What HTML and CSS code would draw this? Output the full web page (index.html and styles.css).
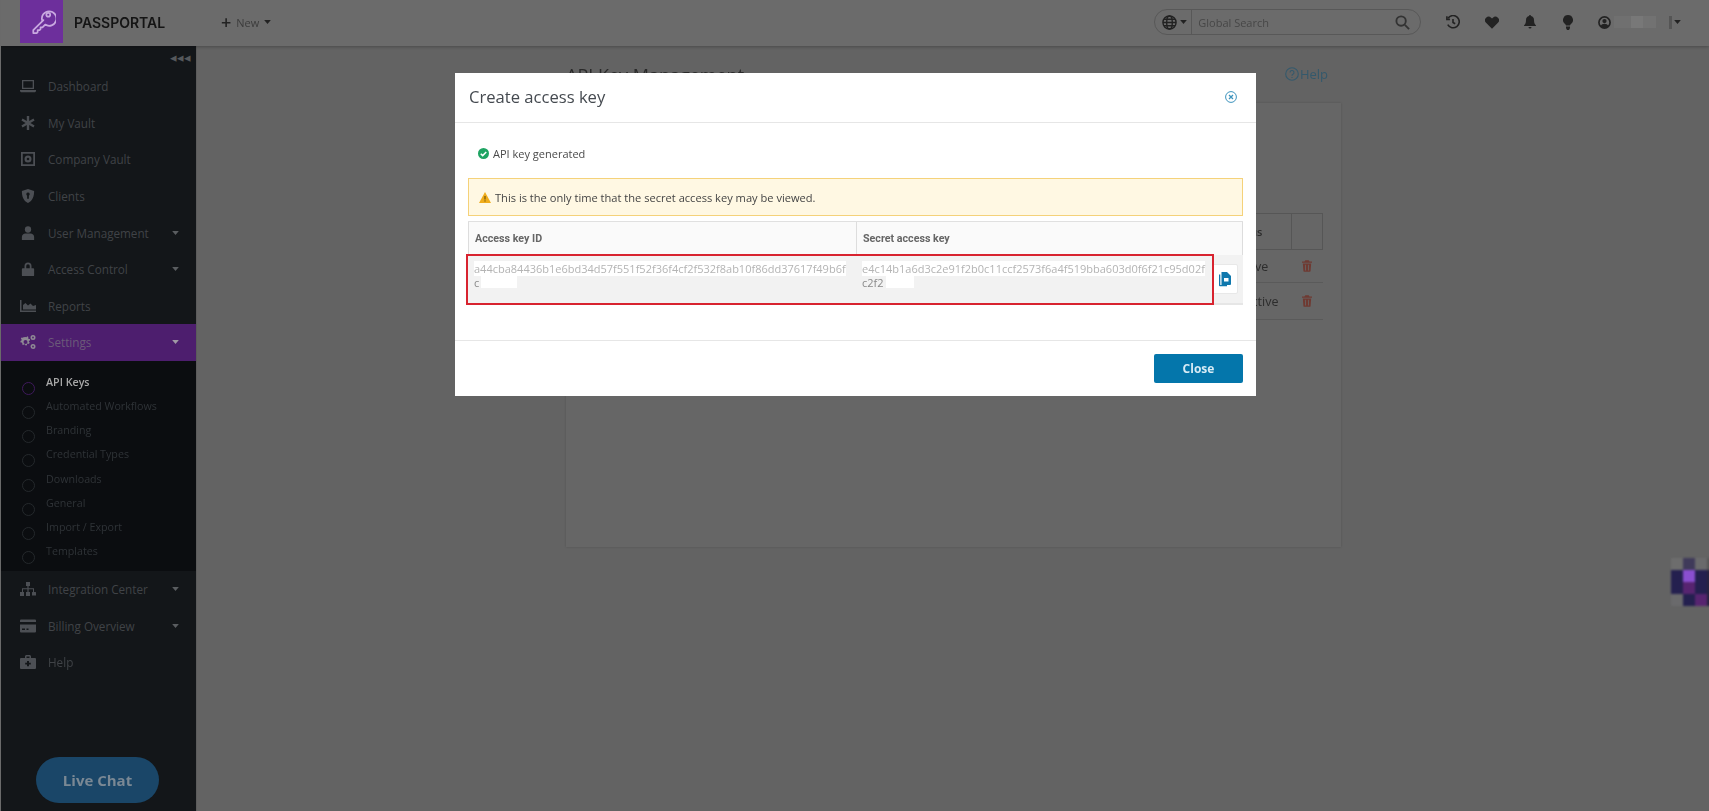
FILE: index.html
```html
<!DOCTYPE html>
<html lang="en">
<head>
    <meta charset="UTF-8">
    <meta name="viewport" content="width=device-width, initial-scale=1.0">
    <title>Passportal - API Keys</title>
    <link rel="stylesheet" href="styles.css">
</head>
<body>
    <svg class="sprite" xmlns="http://www.w3.org/2000/svg">
        <symbol id="i-caret" viewBox="0 0 10 6"><path d="M0 0h10L5 6z"/></symbol>
        <symbol id="i-laptop" viewBox="0 0 16 14"><path d="M2 1h12v9H2zM3.300 2.300v6.400h9.400V2.300zM0 11h16v1.200l-1 1H1l-1-1z" fill-rule="evenodd"/></symbol>
        <symbol id="i-star" viewBox="0 0 14 14"><path d="M5.800 0h2.400v4.900L12.400 2.500l1.200 2L9.400 7l4.200 2.500-1.200 2-4.200-2.400V14H5.800V9.100l-4.200 2.400-1.200-2L4.600 7 .4 4.500l1.200-2 4.200 2.400z"/></symbol>
        <symbol id="i-vault" viewBox="0 0 16 16"><path d="M0 0h16v16H0zM2 2v12h12V2zM8 4a4 4 0 1 1 0 8 4 4 0 0 1 0-8zM8 6.500a1.500 1.500 0 1 0 0 3 1.500 1.500 0 0 0 0-3z" fill-rule="evenodd"/></symbol>
        <symbol id="i-shield" viewBox="0 0 14 16"><path d="M7 0l7 2.200c0 6-1.500 11-7 13.800C1.500 13.200 0 8.200 0 2.200zM7 4a2 2 0 0 0-1 3.700V11h2V7.700A2 2 0 0 0 7 4z" fill-rule="evenodd"/></symbol>
        <symbol id="i-user" viewBox="0 0 14 16"><circle cx="7" cy="4" r="3.600"/><path d="M0 16v-3.500C0 10 2 8.500 4 8.500h6c2 0 4 1.500 4 4V16z"/></symbol>
        <symbol id="i-lock" viewBox="0 0 14 16"><path d="M3 7V4.500a4 4 0 0 1 8 0V7h2a1 1 0 0 1 1 1v7a1 1 0 0 1-1 1H1a1 1 0 0 1-1-1V8a1 1 0 0 1 1-1zM5 7h4V4.500a2 2 0 0 0-4 0z" fill-rule="evenodd"/></symbol>
        <symbol id="i-chart" viewBox="0 0 16 12"><path d="M0 0h1.500v10.500H16V12H0zM3 9.500V5l2.500-2L8 5.500 10.500 3.500 13 6l3-1v4.500z"/></symbol>
        <symbol id="i-cogs" viewBox="0 0 16 14"><path d="M5.500 2l1 .2.700-1 1.300.8-.4 1.100.6.800 1.200 0 .2 1.500-1.100.4-.2 1 .9.800-.8 1.300-1.100-.4-.8.6 0 1.200-1.500.2-.4-1.100-1-.2-.8.900-1.300-.8.400-1.100-.6-.8-1.200 0-.2-1.500 1.100-.4.200-1-.9-.8.8-1.300 1.100.4.800-.6zM5.500 5a2 2 0 1 0 0 4 2 2 0 0 0 0-4z" fill-rule="evenodd"/><path d="M13 0a2.500 2.500 0 1 1 0 5 2.500 2.500 0 0 1 0-5zm0 1.600a.9.900 0 1 0 0 1.800.9.900 0 0 0 0-1.800zM13 9a2.500 2.500 0 1 1 0 5 2.500 2.500 0 0 1 0-5zm0 1.600a.9.900 0 1 0 0 1.800.9.900 0 0 0 0-1.800z" fill-rule="evenodd"/></symbol>
        <symbol id="i-sitemap" viewBox="0 0 16 14"><path d="M6 0h4v4H8.600v2.200H14V10h1.500a.5.500 0 0 1 .5.500v3h-4v-3a.5.500 0 0 1 .5-.5h.5V7.300H8.600V10H10v4H6v-4h1.400V7.300H3V10h1v4H0v-4h2V6.200h5.400V4H6z"/></symbol>
        <symbol id="i-card" viewBox="0 0 16 13"><path d="M1 0h14a1 1 0 0 1 1 1v1.500H0V1a1 1 0 0 1 1-1zM0 5h16v7a1 1 0 0 1-1 1H1a1 1 0 0 1-1-1zM2 9v1.500h3V9zM6.500 9v1.500h2V9z" fill-rule="evenodd"/></symbol>
        <symbol id="i-medkit" viewBox="0 0 16 14"><path d="M5 3V1.500C5 .7 5.700 0 6.500 0h3c.8 0 1.500.7 1.500 1.500V3h4a1 1 0 0 1 1 1v9a1 1 0 0 1-1 1H1a1 1 0 0 1-1-1V4a1 1 0 0 1 1-1zM6.500 1.500V3h3V1.500zM7 6v1.800H5.200v1.700H7v1.800h2V9.500h1.800V7.800H9V6z" fill-rule="evenodd"/></symbol>
        <symbol id="i-trash" viewBox="0 0 12 14"><path d="M4 0h4l1 1.500h3V3H0V1.500h3zM1 4h10l-.7 9a1 1 0 0 1-1 1H2.700a1 1 0 0 1-1-1zM3.500 5.500l.3 7h1l-.3-7zM7.500 5.500l-.3 7h1l.3-7z" fill-rule="evenodd"/></symbol>
    </svg>

    <header class="topbar">
        <div class="logo">
            <svg viewBox="0 0 30 30" width="29" height="29" fill="none" stroke="#c9a9e0" stroke-width="1.800">
                <path d="M17 13.500l-10.500 10.500v3h3.500l1-1v-2h2l1-1v-2h2l2.800-2.800a7.500 7.500 0 1 0-3-3.900z" stroke-linejoin="round"/>
                <circle cx="22" cy="8" r="2"/>
            </svg>
        </div>
        <div class="brand">PASSPORTAL</div>
        <div class="new-menu">
            <span class="plus">+</span> New
            <svg class="caret dark"><use href="#i-caret"/></svg>
        </div>
        <div class="search">
            <div class="search-scope">
                <svg width="15" height="15" viewBox="0 0 16 16" fill="none" stroke="#222" stroke-width="1.500">
                    <circle cx="8" cy="8" r="7"/><ellipse cx="8" cy="8" rx="3" ry="7"/><path d="M1 8h14M2 4.500h12M2 11.500h12"/>
                </svg>
                <svg class="caret dark"><use href="#i-caret"/></svg>
            </div>
            <span class="search-text">Global Search</span>
            <svg class="search-icon" width="15" height="15" viewBox="0 0 16 16" fill="none" stroke="#333" stroke-width="2">
                <circle cx="6.500" cy="6.500" r="5"/><path d="M10.500 10.500L15 15"/>
            </svg>
        </div>
        <div class="top-icons">
            <svg width="14" height="14" viewBox="0 0 16 16" fill="none" stroke="#222" stroke-width="1.800"><path d="M2.500 3.500A7 7 0 1 1 2 11M1 1.500v3.500h3.500M8 4.500V8.500l2.500 1.500"/></svg>
            <svg width="14" height="13" viewBox="0 0 16 14" fill="#222"><path d="M8 14L1.200 7.200A4 4 0 0 1 7 1.500l1 1 1-1a4 4 0 0 1 5.800 5.700z"/></svg>
            <svg width="12" height="14" viewBox="0 0 12 14" fill="#222"><path d="M6 0a1 1 0 0 1 1 1.100C9 1.600 10 3.200 10 5c0 3 .8 4.300 2 5.500V11H0v-.5C1.200 9.300 2 8 2 5c0-1.800 1-3.400 3-3.900A1 1 0 0 1 6 0zM4.500 12h3a1.500 1.500 0 0 1-3 0z"/></svg>
            <svg width="10" height="15" viewBox="0 0 10 15" fill="#222"><path d="M5 0a5 5 0 0 1 3 9c-.6.500-1 1-1 1.500H3C3 10 2.600 9.500 2 9a5 5 0 0 1 3-9zM3 11.500h4V13l-1 2H4l-1-2z"/></svg>
            <svg class="user-icon" width="13" height="13" viewBox="0 0 14 14"><circle cx="7" cy="7" r="6" fill="none" stroke="#222" stroke-width="1.800"/><circle cx="7" cy="5.500" r="2.300" fill="#222"/><path d="M2.800 11c.8-2 2.400-2.700 4.200-2.700s3.400.7 4.200 2.700A6 6 0 0 1 2.800 11z" fill="#222"/></svg>
            <div class="user-name"></div>
            <div class="user-split"></div>
            <svg class="caret dark"><use href="#i-caret"/></svg>
        </div>
    </header>

    <div class="layout">
        <aside class="sidebar">
            <div class="collapse">&#9666;&#9666;&#9666;</div>
            <nav class="nav">
                <a class="nav-item"><svg class="nav-icon"><use href="#i-laptop"/></svg>Dashboard</a>
                <a class="nav-item"><svg class="nav-icon"><use href="#i-star"/></svg>My Vault</a>
                <a class="nav-item"><svg class="nav-icon"><use href="#i-vault"/></svg>Company Vault</a>
                <a class="nav-item"><svg class="nav-icon"><use href="#i-shield"/></svg>Clients</a>
                <a class="nav-item"><svg class="nav-icon"><use href="#i-user"/></svg>User Management<svg class="caret"><use href="#i-caret"/></svg></a>
                <a class="nav-item"><svg class="nav-icon"><use href="#i-lock"/></svg>Access Control<svg class="caret"><use href="#i-caret"/></svg></a>
                <a class="nav-item"><svg class="nav-icon"><use href="#i-chart"/></svg>Reports</a>
                <a class="nav-item active"><svg class="nav-icon"><use href="#i-cogs"/></svg>Settings<svg class="caret"><use href="#i-caret"/></svg></a>
                <div class="subnav">
                    <a class="sub-item current">API Keys</a>
                    <a class="sub-item">Automated Workflows</a>
                    <a class="sub-item">Branding</a>
                    <a class="sub-item">Credential Types</a>
                    <a class="sub-item">Downloads</a>
                    <a class="sub-item">General</a>
                    <a class="sub-item">Import / Export</a>
                    <a class="sub-item">Templates</a>
                </div>
                <a class="nav-item"><svg class="nav-icon"><use href="#i-sitemap"/></svg>Integration Center<svg class="caret"><use href="#i-caret"/></svg></a>
                <a class="nav-item"><svg class="nav-icon"><use href="#i-card"/></svg>Billing Overview<svg class="caret"><use href="#i-caret"/></svg></a>
                <a class="nav-item"><svg class="nav-icon"><use href="#i-medkit"/></svg>Help</a>
            </nav>
            <button class="live-chat">Live Chat</button>
        </aside>

        <main class="content">
            <div class="page-head">
                <h1>API Key Management</h1>
                <a class="help-link">
                    <svg width="14" height="14" viewBox="0 0 14 14" fill="none" stroke="#34596c" stroke-width="1.100"><circle cx="7" cy="7" r="6.300"/><path d="M5 5.500a2 2 0 1 1 3 1.700c-.7.400-1 .8-1 1.500M7 10v1"/></svg>Help
                </a>
            </div>
            <section class="card">
                <table class="key-table">
                    <tr><th class="col-name">Access Key ID</th><th class="col-status">Status</th><th class="col-del"></th></tr>
                    <tr><td></td><td>Active</td><td><svg class="trash"><use href="#i-trash"/></svg></td></tr>
                    <tr><td></td><td>Inactive</td><td><svg class="trash"><use href="#i-trash"/></svg></td></tr>
                </table>
            </section>
        </main>
    </div>

    <div class="pixels">
        <i></i><i class="p1"></i><i class="p2"></i><i class="p3"></i>
        <i class="p4"></i><i class="p5"></i><i class="p4"></i><i class="p6"></i>
        <i class="p4"></i><i class="p7"></i><i class="p4"></i><i class="p6"></i>
        <i class="p2"></i><i class="p4"></i><i class="p7"></i><i class="p6"></i>
    </div>

    <div class="modal">
        <div class="modal-head">
            <h2>Create access key</h2>
            <svg width="12" height="12" viewBox="0 0 12 12" fill="none" stroke="#3d93bd" stroke-width="1"><circle cx="6" cy="6" r="5.400"/><path d="M4 4l4 4M8 4l-4 4" stroke-width="1.300"/></svg>
        </div>
        <div class="modal-body">
            <p class="success">
                <svg width="11" height="11" viewBox="0 0 12 12"><circle cx="6" cy="6" r="6" fill="#1fa463"/><path d="M3 6.200l2.100 2.100L9 4.300" fill="none" stroke="#fff" stroke-width="1.600"/></svg>
                API key generated
            </p>
            <div class="alert">
                <svg width="12" height="11" viewBox="0 0 12 11"><path d="M6 0l6 11H0z" fill="#f0ad1c"/><path d="M6 4v3.500M6 8.400v1.100" stroke="#5a4300" stroke-width="1"/></svg>
                This is the only time that the secret access key may be viewed.
            </div>
            <div class="keys">
                <div class="keys-head">Access key ID</div>
                <div class="keys-head">Secret access key</div>
                <div class="keys-cell">
                    <div class="key-text"><span class="secret">a44cba84436b1e6bd34d57f551f52f36f4cf2f532f8ab10f86dd37617f49b6f</span> <span class="tail">c</span></div>
                </div>
                <div class="keys-cell second">
                    <div class="key-text"><span class="secret">e4c14b1a6d3c2e91f2b0c11ccf2573f6a4f519bba603d0f6f21c95d02f</span> <span class="tail">c2f2</span></div>
                    <button class="copy">
                        <svg width="12" height="15" viewBox="0 0 12 15" fill="#0f78ad"><path d="M0 2.500h1.300V13H8v1.300H1a1 1 0 0 1-1-1z"/><path d="M2.500 0H8l4 4v8a1 1 0 0 1-1 1H2.500zM5 6v3.500h4.500V6z" fill-rule="evenodd"/></svg>
                    </button>
                </div>
                <div class="highlight"></div>
            </div>
        </div>
        <div class="modal-foot">
            <button class="btn-close">Close</button>
        </div>
    </div>
</body>
</html>
```

FILE: styles.css
```css
* {
    box-sizing: border-box;
}
html, body {
    height: 100%;
}
body {
    margin: 0;
    overflow: hidden;
    background-color: #636363;
    border-left: 1px solid #6a6a6a;
    font-family: "Open Sans", "Liberation Sans", sans-serif;
    color: #333;
}
/* the screenshot is soft all over */
.topbar, .layout, .modal {
    filter: blur(0.35px);
}
.sprite {
    display: none;
}
.caret {
    width: 7px;
    height: 4px;
    fill: #5a5d60;
}
.caret.dark {
    fill: #222;
}

/* top bar */
.topbar {
    height: 46px;
    padding-bottom: 2px;
    display: flex;
    align-items: center;
    background-color: #6b6b6b;
    box-shadow: 0 1px 3px rgba(0, 0, 0, 0.25);
    position: relative;
    z-index: 1;
}
.logo {
    width: 43px;
    height: 43px;
    margin: 0 0 1px 19px;
    background-color: #6d2f9c;
    display: flex;
    align-items: center;
    justify-content: center;
}
.brand {
    margin-left: 11px;
    width: 147px;
    font-family: Inter, "Liberation Sans", sans-serif;
    font-size: 14px;
    font-weight: 600;
    color: #141414;
}
.new-menu {
    display: flex;
    align-items: center;
    gap: 5px;
    font-size: 11px;
    color: #3c3c3c;
}
.plus {
    font-size: 18px;
    line-height: 18px;
    font-weight: 600;
    color: #222;
}
.search {
    margin-left: 883px;
    width: 267px;
    height: 26px;
    display: flex;
    align-items: center;
    border: 1px solid #585858;
    border-radius: 13px;
}
.search-scope {
    width: 37px;
    height: 100%;
    padding-left: 7px;
    display: flex;
    align-items: center;
    gap: 3px;
    border-right: 1px solid #585858;
}
.search-text {
    margin-left: 6px;
    flex: 1;
    font-size: 11px;
    color: #474747;
}
.search-icon {
    margin-right: 10px;
}
.top-icons {
    margin-left: 25px;
    display: flex;
    align-items: center;
}
.top-icons svg:nth-child(1), .top-icons svg:nth-child(2) {
    margin-right: 25px;
}
.top-icons svg:nth-child(3) {
    margin-right: 27px;
}
.top-icons svg:nth-child(4) {
    margin-right: 25px;
}
.user-name {
    width: 42px;
    height: 12px;
    margin-left: 3px;
    background: linear-gradient(90deg, #707070 0 40%, #787878 40% 70%, #727272 70%);
}
.user-split {
    width: 3px;
    height: 13px;
    margin: 0 2px 0 13px;
    background-color: #555;
}

/* layout */
.layout {
    height: calc(100% - 46px);
    display: flex;
}
.sidebar {
    width: 196px;
    flex-shrink: 0;
    display: flex;
    flex-direction: column;
    background-color: #131619;
    border-right: 1px solid #5b5b5b;
}
.collapse {
    height: 22px;
    padding-right: 5px;
    text-align: right;
    font-size: 13px;
    line-height: 22px;
    letter-spacing: 0;
    color: #55585b;
}
.nav-item {
    height: 36.6px;
    padding: 0 17px 0 19px;
    display: flex;
    align-items: center;
    font-size: 11.700px;
    color: #404347;
}
.nav-item .caret {
    margin-left: auto;
}
.nav-icon {
    width: 16px;
    height: 14px;
    margin-right: 12px;
    fill: #4c4f54;
}
.nav-item.active {
    background-color: #4d1e6e;
    color: #6b5a79;
}
.nav-item.active .nav-icon {
    fill: #8f8a94;
}
.nav-item.active .caret {
    fill: #a09aa5;
}
.subnav {
    height: 210px;
    padding-top: 9px;
    background-color: #0b0d10;
}
.sub-item {
    height: 24.200px;
    padding-left: 45px;
    display: block;
    position: relative;
    font-size: 10.700px;
    line-height: 24.200px;
    color: #2f3337;
}
.sub-item::before {
    content: "";
    position: absolute;
    left: 21px;
    top: 12px;
    width: 11px;
    height: 11px;
    border: 1px solid #25292c;
    border-radius: 50%;
}
.sub-item.current {
    font-weight: 600;
    color: #a8a8a8;
}
.sub-item.current::before {
    border-color: #3f1a5c;
}
.live-chat {
    width: 123px;
    height: 46px;
    margin: auto 0 8px 35px;
    border: 0;
    border-radius: 23px;
    background-color: #1a4668;
    font-family: "Open Sans", "Liberation Sans", sans-serif;
    font-size: 15px;
    font-weight: 700;
    color: #7a8894;
}

/* page behind the dialog */
.content {
    width: 775px;
    margin-left: 369px;
}
.page-head {
    height: 57px;
    padding: 16px 13px 0 0;
    display: flex;
    justify-content: space-between;
}
.page-head h1 {
    margin: 3px 0 0;
    font-size: 18px;
    font-weight: 400;
    line-height: 20px;
    color: #2a2a2a;
}
.help-link {
    display: flex;
    align-items: center;
    gap: 1px;
    height: 24px;
    font-size: 13px;
    color: #34596c;
}
.card {
    height: 444px;
    padding: 110px 18px 0 14px;
    background-color: #666;
    box-shadow: 0 0 2px rgba(0, 0, 0, 0.18);
}
.key-table {
    width: 100%;
    border-collapse: collapse;
    font-size: 12.500px;
    color: #2c2c2c;
}
.key-table th {
    height: 36px;
    border: 1px solid #565656;
    font-size: 11px;
    font-weight: 600;
    text-align: left;
    padding: 0 4px;
}
.key-table td {
    height: 33px;
    border-bottom: 1px solid #5a5a5a;
    padding: 0 0 0 9px;
}
.key-table td:last-child {
    padding: 0;
}
.key-table tr:last-child td {
    height: 37px;
}
.col-status {
    width: 67px;
}
.col-del {
    width: 31px;
}
.trash {
    width: 10px;
    height: 12px;
    display: block;
    margin: 0 auto;
    fill: #6f3a32;
}

/* scrambled corner thing on the right edge */
.pixels {
    position: fixed;
    left: 1671px;
    top: 558px;
    display: grid;
    grid-template-columns: repeat(4, 12px);
    grid-auto-rows: 12px;
    filter: blur(1px);
}
.pixels i {
    background-color: #6d6d6d;
}
.pixels .p1 { background-color: #3f3a5a; }
.pixels .p2 { background-color: #6a6a6c; }
.pixels .p3 { background-color: #565656; }
.pixels .p4 { background-color: #24204f; }
.pixels .p5 { background-color: #8a4fd0; }
.pixels .p6 { background-color: #27233f; }
.pixels .p7 { background-color: #572470; }

/* dialog */
.modal {
    position: fixed;
    left: 455px;
    top: 73px;
    width: 801px;
    height: 323px;
    display: flex;
    flex-direction: column;
    background-color: #fff;
}
.modal-head {
    height: 50px;
    padding: 0 19px 2px 14px;
    display: flex;
    align-items: center;
    justify-content: space-between;
    border-bottom: 1px solid #e6e6e6;
}
.modal-head h2 {
    margin: 0;
    font-size: 16.600px;
    font-weight: 500;
    color: #454a50;
}
.modal-body {
    height: 217px;
    padding: 0 13px;
}
.success {
    margin: 0;
    height: 55px;
    padding: 5px 0 0 10px;
    display: flex;
    align-items: center;
    gap: 4px;
    font-size: 11px;
    color: #4a4a4a;
}
.alert {
    height: 38px;
    padding-left: 10px;
    display: flex;
    align-items: center;
    gap: 4px;
    background-color: #fff8e3;
    border: 1px solid #f5d27a;
    font-size: 11.100px;
    color: #444;
}
.keys {
    position: relative;
    margin-top: 5px;
    display: grid;
    grid-template-columns: 388px 1fr;
    border-top: 1px solid #e0e0e0;
}
.keys-head {
    height: 33px;
    padding-left: 6px;
    display: flex;
    align-items: center;
    background-color: #fafafa;
    border-left: 1px solid #ddd;
    font-family: Roboto, "Liberation Sans", sans-serif;
    font-size: 10.700px;
    font-weight: 700;
    color: #666;
}
.keys-head:nth-child(2) {
    border-right: 1px solid #ddd;
}
.keys-cell {
    height: 50px;
    padding: 7px 6px 0 6px;
    background-color: #f2f2f2;
    border-bottom: 2px solid #e6e6e6;
    font-size: 11px;
    line-height: 14px;
    word-break: break-all;
    color: #b4b4b4;
}
.keys-cell.second {
    display: flex;
    padding-right: 5px;
}
.keys-cell.second .key-text {
    flex: 1;
    min-width: 0;
    margin-right: 7px;
}
.key-text .secret {
    background-color: #fff;
    filter: blur(0.6px);
}
.tail {
    display: block;
    color: #8a8a8a;
}
/* white smear left behind by the redaction */
.tail::after {
    content: "";
    display: inline-block;
    width: 36px;
    height: 12px;
    margin-left: 2px;
    vertical-align: top;
    background-color: #fff;
    filter: blur(0.6px);
}
.keys-cell.second .tail::after {
    width: 28px;
}
.copy {
    width: 26px;
    height: 30px;
    margin-top: 2px;
    padding: 0;
    flex-shrink: 0;
    display: flex;
    align-items: center;
    justify-content: center;
    background-color: #fff;
    border: 1px solid #e8e8e8;
    border-radius: 2px;
}
.highlight {
    position: absolute;
    left: -2px;
    right: 29px;
    top: 32px;
    height: 51px;
    border: 2px solid #d8232f;
}
.modal-foot {
    flex: 1;
    padding: 13px 13px 0;
    display: flex;
    justify-content: flex-end;
    border-top: 1px solid #e6e6e6;
}
.btn-close {
    width: 89px;
    height: 29px;
    border: 0;
    border-radius: 2px;
    background-color: #0476ab;
    font-family: "Open Sans", "Liberation Sans", sans-serif;
    font-size: 12px;
    font-weight: 700;
    color: #d7ebf5;
}
```
